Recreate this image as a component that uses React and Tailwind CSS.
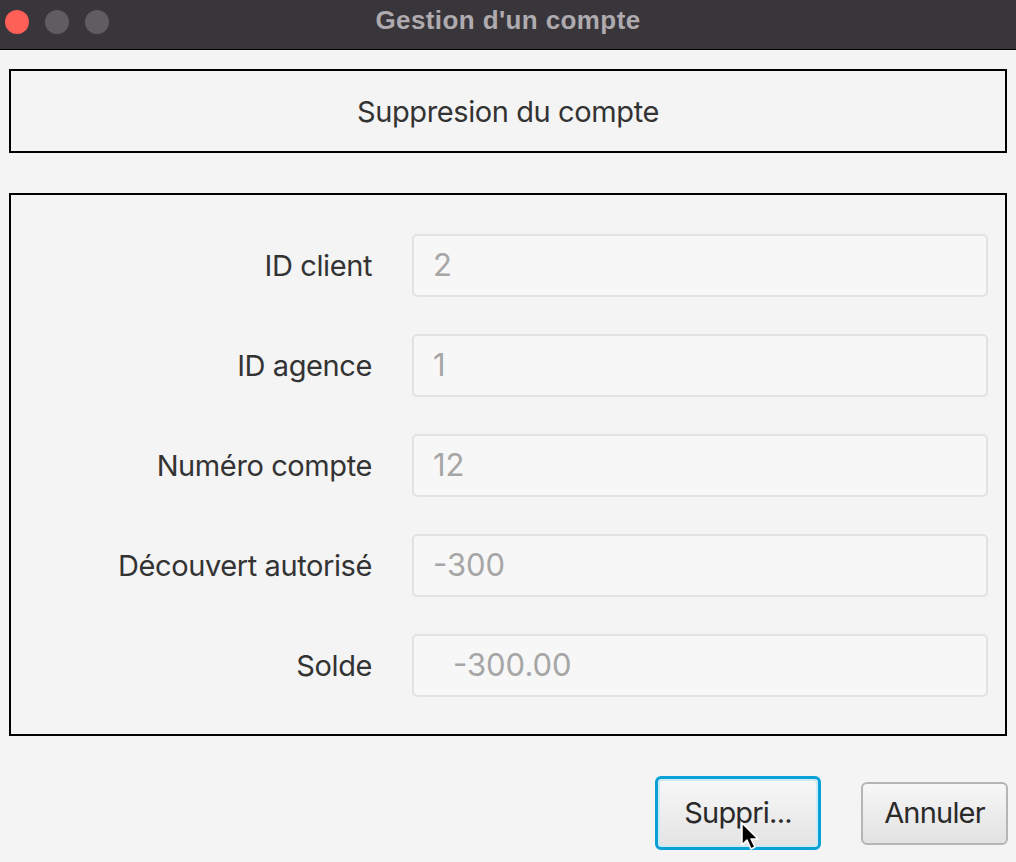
import React from 'react';

const rows = [
  { label: 'ID client', value: '2' },
  { label: 'ID agence', value: '1' },
  { label: 'Numéro compte', value: '12' },
  { label: 'Découvert autorisé', value: '-300' },
  { label: 'Solde', value: '-300.00', indent: true },
];

export default function App() {
  return (
    <div className="w-[1016px] h-[862px] bg-[#f4f4f4] flex flex-col overflow-hidden" style={{ fontFamily: 'Inter, Roboto, "Liberation Sans", sans-serif' }}>
      {/* title bar */}
      <div className="relative h-[50px] bg-[#38353b] border-b border-black flex items-center justify-center shrink-0">
        <div className="absolute left-[5px] top-[10px] flex gap-[16px]">
          <div className="w-[24px] h-[24px] rounded-full bg-[#fe5f57]" />
          <div className="w-[24px] h-[24px] rounded-full bg-[#5f5c62]" />
          <div className="w-[24px] h-[24px] rounded-full bg-[#5f5c62]" />
        </div>
        <span className="text-[26px] font-bold text-[#aeaaae] tracking-[0.4px] -mt-[8px]" style={{ fontFamily: '"Liberation Sans", sans-serif' }}>Gestion d'un compte</span>
      </div>

      {/* header box */}
      <div className="mx-[9px] mt-[19px] h-[84px] border-2 border-black flex items-center justify-center">
        <span className="text-[29px] text-[#333] tracking-[-0.4px] mt-[2px]">Suppresion du compte</span>
      </div>

      {/* form */}
      <div className="mx-[9px] mt-[40px] h-[543px] border-2 border-black pt-[39px] flex flex-col gap-[37px]">
        {rows.map((r) => (
          <div key={r.label} className="flex items-center h-[63px]">
            <div className="w-[361px] text-right text-[29px] text-[#333] tracking-[-0.4px]">{r.label}</div>
            <div className={`ml-[40px] w-[576px] h-[63px] rounded-[5px] border-2 border-[#e2e2e2] bg-[#f7f7f7] flex items-center ${r.indent ? 'pl-[39px]' : 'pl-[19px]'}`}>
              <span className="text-[31px] text-[#a6a6a6]">{r.value}</span>
            </div>
          </div>
        ))}
      </div>

      {/* buttons */}
      <div className="flex items-center justify-end pr-[8px] mt-[40px] gap-[40px]">
        <div className="relative w-[166px] h-[74px] rounded-[6px] border-[3px] border-[#0aa0d8] bg-[#cdeaf7] p-[2px]">
          <div className="w-full h-full rounded-[3px] bg-gradient-to-b from-[#f7f7f7] to-[#e4e4e4] flex items-center justify-center">
            <span className="text-[29px] text-[#2a2a2a] tracking-[-0.8px]">Suppri...</span>
          </div>
          <svg className="absolute left-[83px] top-[43px]" width="20" height="30" viewBox="0 0 20 30">
            <path d="M1 1 L1 23 L6 18 L10 27 L14 25 L10 17 L17 17 Z" fill="#000" stroke="#fff" strokeWidth="1.5" strokeLinejoin="round" />
          </svg>
        </div>
        <div className="w-[147px] h-[63px] rounded-[6px] border-2 border-[#b5b5b5] bg-gradient-to-b from-[#f7f7f7] to-[#e2e2e2] flex items-center justify-center">
          <span className="text-[29px] text-[#2a2a2a] tracking-[-0.8px]">Annuler</span>
        </div>
      </div>
    </div>
  );
}
